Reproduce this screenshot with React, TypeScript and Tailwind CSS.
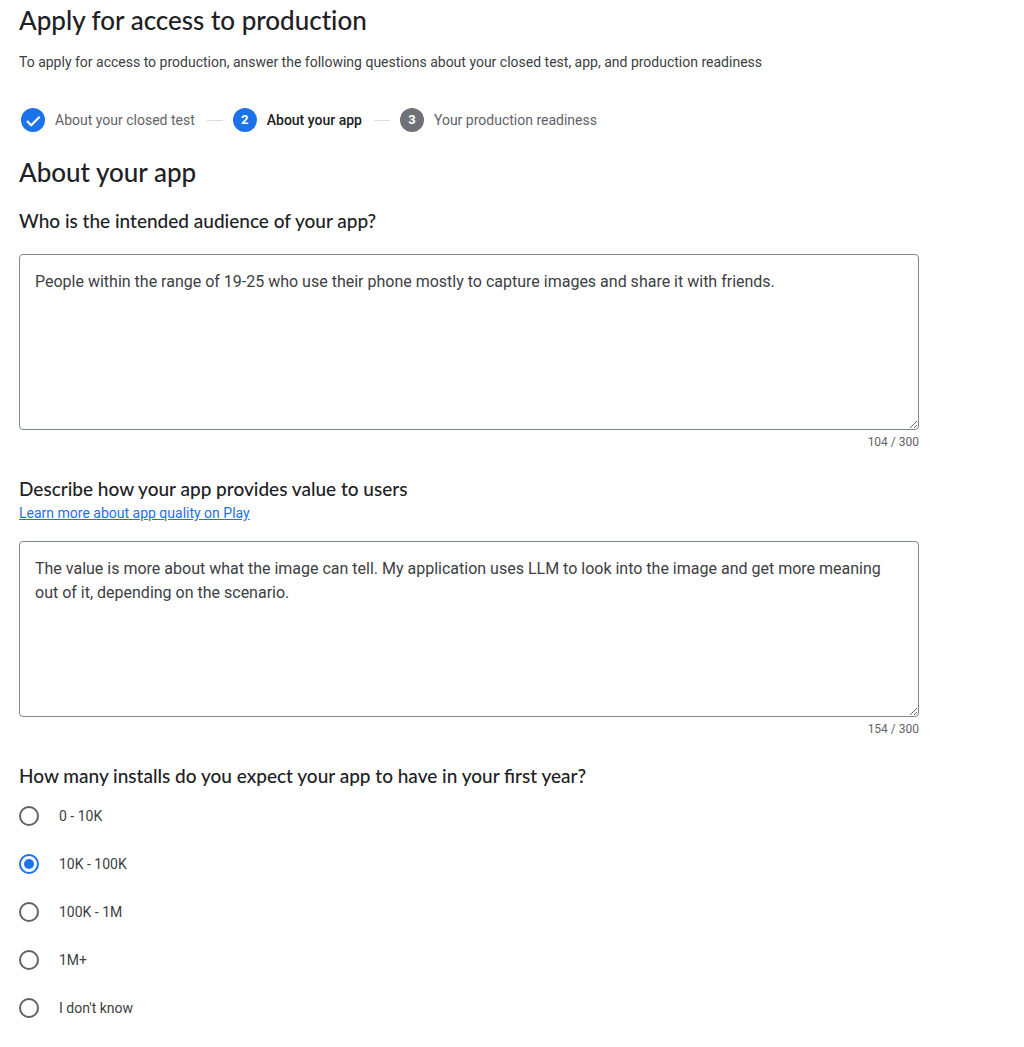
import { useState } from 'react';

interface Step {
  label: string;
  status: 'done' | 'current' | 'upcoming';
}

const MAX_LENGTH = 300;

const STEPS: Step[] = [
  { label: 'About your closed test', status: 'done' },
  { label: 'About your app', status: 'current' },
  { label: 'Your production readiness', status: 'upcoming' },
];

const INSTALL_RANGES = ['0 - 10K', '10K - 100K', '100K - 1M', '1M+', "I don't know"];

function Stepper() {
  return (
    <ol className="mt-9 flex flex-wrap items-center gap-3 px-0.5">
      {STEPS.map((step, i) => (
        <li
          key={step.label}
          aria-current={step.status === 'current' ? 'step' : undefined}
          className="flex items-center gap-2.5"
        >
          {i > 0 && <span className="h-px w-4 bg-[#dadce0]" />}
          <span
            className={`flex size-6 shrink-0 items-center justify-center rounded-full text-[13px] font-bold text-white ${
              step.status === 'upcoming' ? 'bg-[#6e7175]' : 'bg-[#1a73e8]'
            }`}
          >
            {step.status === 'done' ? (
              <svg viewBox="0 0 24 24" className="size-6" fill="none" aria-hidden="true">
                <path d="M6 13 10.2 17.2 18.7 8.7" stroke="currentColor" strokeWidth="2.2" />
              </svg>
            ) : (
              i + 1
            )}
          </span>
          <span
            className={`text-sm ${
              step.status === 'current' ? 'font-medium text-[#202124]' : 'text-[#5f6368]'
            }`}
          >
            {step.label}
          </span>
        </li>
      ))}
    </ol>
  );
}

interface AnswerFieldProps {
  labelledBy: string;
  value: string;
  onChange: (value: string) => void;
}

function AnswerField({ labelledBy, value, onChange }: AnswerFieldProps) {
  return (
    <div>
      <textarea
        aria-labelledby={labelledBy}
        value={value}
        maxLength={MAX_LENGTH}
        onChange={(e) => onChange(e.target.value)}
        className="block h-44 w-full resize rounded border border-[#80868b] p-[15px] text-base leading-6 text-[#3c4043] outline-none focus:border-[#1a73e8]"
      />
      <p className="mt-1 text-right text-xs leading-4 text-[#5f6368]">
        {value.length} / {MAX_LENGTH}
      </p>
    </div>
  );
}

export default function App() {
  const [audience, setAudience] = useState(
    'People within the range of 19-25 who use their phone mostly to capture images and share it with friends.'
  );
  const [value, setValue] = useState(
    'The value is more about what the image can tell. My application uses LLM to look into the image and get more meaning out of it, depending on the scenario.'
  );
  const [installs, setInstalls] = useState('10K - 100K');

  return (
    <main className="min-h-screen bg-white px-[19px] pt-1 pb-4 font-['Roboto',sans-serif] text-[#202124]">
      <h1 className="font-['Lato',sans-serif] text-[26px] leading-8 font-medium [font-variant-ligatures:none]">
        Apply for access to production
      </h1>
      <p className="mt-4 text-sm leading-5 text-[#3c4043]">
        To apply for access to production, answer the following questions about your closed test,
        app, and production readiness
      </p>

      <Stepper />

      <form className="max-w-[900px]" onSubmit={(e) => e.preventDefault()}>
        <h2 className="mt-6 font-['Lato',sans-serif] text-[26px] leading-8 font-medium">
          About your app
        </h2>

        <h3
          id="audience-label"
          className="my-[21px] font-['Lato',sans-serif] text-[19px] leading-6 font-medium"
        >
          Who is the intended audience of your app?
        </h3>
        <AnswerField labelledBy="audience-label" value={audience} onChange={setAudience} />

        <h3
          id="value-label"
          className="mt-[27px] font-['Lato',sans-serif] text-[19px] leading-6 font-medium"
        >
          Describe how your app provides value to users
        </h3>
        <div className="mb-4 text-sm leading-6">
          <a href="#quality" className="text-[#1a73e8] underline">
            Learn more about app quality on Play
          </a>
        </div>
        <AnswerField labelledBy="value-label" value={value} onChange={setValue} />

        <fieldset className="mt-[27px]">
          <legend className="font-['Lato',sans-serif] text-[19px] leading-6 font-medium">
            How many installs do you expect your app to have in your first year?
          </legend>
          <div className="mt-1">
            {INSTALL_RANGES.map((range) => (
              <label key={range} className="flex h-12 items-center gap-5 text-sm text-[#3c4043]">
                <input
                  type="radio"
                  name="installs"
                  value={range}
                  checked={installs === range}
                  onChange={() => setInstalls(range)}
                  className="flex size-5 appearance-none items-center justify-center rounded-full border-2 border-[#5f6368] before:size-2.5 before:rounded-full checked:border-[#1a73e8] checked:before:bg-[#1a73e8]"
                />
                {range}
              </label>
            ))}
          </div>
        </fieldset>
      </form>
    </main>
  );
}
